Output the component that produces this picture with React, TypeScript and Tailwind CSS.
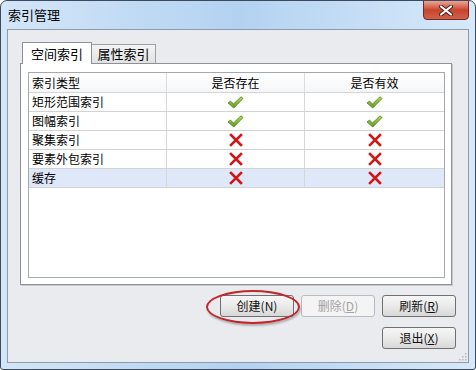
import type { ReactNode } from 'react';

const FONT = { fontFamily: '"Microsoft YaHei", "Noto Sans CJK SC", "Noto Sans", sans-serif' };

type Row = { name: string; exists: boolean; valid: boolean; selected?: boolean };

const ROWS: Row[] = [
  { name: '矩形范围索引', exists: true, valid: true },
  { name: '图幅索引', exists: true, valid: true },
  { name: '聚集索引', exists: false, valid: false },
  { name: '要素外包索引', exists: false, valid: false },
  { name: '缓存', exists: false, valid: false, selected: true },
];

function Check() {
  return (
    <svg width="17" height="13" viewBox="0 0 17 13">
      <defs>
        <linearGradient id="ck" x1="0" y1="0" x2="0" y2="1">
          <stop offset="0" stopColor="#b6e05a" />
          <stop offset="1" stopColor="#5a9a1e" />
        </linearGradient>
      </defs>
      <path d="M1 7 L3.5 5 L6.5 8 L14 0.8 L16 2.5 L6.8 12 Z" fill="url(#ck)" stroke="#4f7f1c" strokeWidth="0.8" strokeLinejoin="round" />
    </svg>
  );
}

function Cross() {
  return (
    <svg width="14" height="14" viewBox="0 0 14 14">
      <path d="M2 2 L12 12 M12 2 L2 12" stroke="#d01818" strokeWidth="2.6" strokeLinecap="square" />
    </svg>
  );
}

function Mark({ ok }: { ok: boolean }) {
  return ok ? <Check /> : <Cross />;
}

function Btn({ children, disabled }: { children: ReactNode; disabled?: boolean }) {
  return (
    <button
      type="button"
      disabled={disabled}
      className={`w-[74px] h-[22px] rounded-[3px] border text-[12px] leading-none flex items-center justify-center ${
        disabled
          ? 'border-[#b8bcc0] bg-[#f4f4f4] text-[#a3a3a3]'
          : 'border-[#707070] bg-gradient-to-b from-[#f6f6f6] via-[#eaeaea] to-[#d8d8d8] text-[#111]'
      }`}
    >
      {children}
    </button>
  );
}

export default function App() {
  return (
    <div className="w-[476px] h-[370px] relative bg-white" style={FONT}>
      <div className="w-[476px] h-[370px] flex flex-col rounded-t-[7px] rounded-b-[3px] border border-[#3b4a5c] bg-gradient-to-r from-[#d3e6f8] via-[#b3d2f1] to-[#d7e9fa] overflow-hidden">
        {/* title bar */}
        <div className="h-[28px] flex items-start relative">
          <span className="mt-[6px] ml-[7px] text-[13px] text-black leading-[16px]">索引管理</span>
          <div className="absolute right-[6px] top-[-1px] w-[46px] h-[20px] rounded-b-[4px] border border-[#6d2a22] bg-gradient-to-b from-[#e8a595] via-[#c9432c] to-[#d0614a] flex items-center justify-center">
            <svg width="14" height="11" viewBox="0 0 14 11">
              <path d="M2 1.5 L12 9.5 M12 1.5 L2 9.5" stroke="#4a1e18" strokeWidth="4" strokeLinecap="round" />
              <path d="M2 1.5 L12 9.5 M12 1.5 L2 9.5" stroke="#ffffff" strokeWidth="2.2" strokeLinecap="round" />
            </svg>
          </div>
        </div>

        {/* client area */}
        <div className="mx-[6px] mb-[6px] flex-1 border border-[#8d9bab] bg-[#eaebee] flex flex-col relative">
          <div className="flex items-end h-[33px] pl-[14px]">
            <div className="h-[22px] px-[8px] border border-b-0 border-[#8e9099] bg-white text-[13px] flex items-center relative top-[1px] z-10">
              空间索引
            </div>
            <div className="h-[19px] w-[64px] border border-l-0 border-b-0 border-[#9ea0a6] bg-gradient-to-b from-[#f3f3f3] to-[#e2e2e2] text-[13px] flex items-center justify-center">
              属性索引
            </div>
          </div>

          <div className="ml-[12px] w-[432px] h-[222px] border border-[#8e9099] bg-white shadow-[1px_1px_0_#c7c9cf] pl-[7px] pr-[6px] pt-[8px] pb-[6px]">
            <div className="h-full border border-[#a5a8ae] bg-white text-[12px] text-black">
              <div className="grid grid-cols-[138px_138px_1fr] h-[20px] border-b border-[#d5d5d5] bg-gradient-to-b from-white to-[#f5f6f7]">
                <div className="pl-[3px] flex items-center border-r border-[#dcdcdc]">索引类型</div>
                <div className="flex items-center justify-center border-r border-[#dcdcdc]">是否存在</div>
                <div className="flex items-center justify-center">是否有效</div>
              </div>
              {ROWS.map((r) => (
                <div
                  key={r.name}
                  className={`grid grid-cols-[138px_138px_1fr] h-[19px] border-b border-[#d3d3d3] ${r.selected ? 'bg-[#dfe8f9]' : ''}`}
                >
                  <div className="pl-[3px] flex items-center border-r border-[#d7d7d7]">{r.name}</div>
                  <div className="flex items-center justify-center border-r border-[#d7d7d7]">
                    <Mark ok={r.exists} />
                  </div>
                  <div className="flex items-center justify-center">
                    <Mark ok={r.valid} />
                  </div>
                </div>
              ))}
            </div>
          </div>

          <div className="flex flex-col items-end pr-[12px] pt-[10px] gap-[10px]">
            <div className="flex gap-[7px]">
              <Btn>创建(N)</Btn>
              <Btn disabled>
                删除(<span className="underline">D</span>)
              </Btn>
              <Btn>
                刷新(<span className="underline">R</span>)
              </Btn>
            </div>
            <Btn>
              退出(<span className="underline">X</span>)
            </Btn>
          </div>

          {/* size grip */}
          <svg className="absolute right-[1px] bottom-[1px]" width="10" height="10" viewBox="0 0 10 10">
            {[
              [8, 2], [8, 5], [5, 5], [8, 8], [5, 8], [2, 8],
            ].map(([x, y]) => (
              <rect key={`${x}-${y}`} x={x} y={y} width="1.5" height="1.5" fill="#b3b6bb" />
            ))}
          </svg>
        </div>
      </div>

      {/* annotation */}
      <div className="absolute left-[206px] top-[290px] w-[94px] h-[34px] rounded-[50%] border-2 border-[#c1272d] shadow-[1px_2px_2px_rgba(0,0,0,0.25)] pointer-events-none" />
    </div>
  );
}
